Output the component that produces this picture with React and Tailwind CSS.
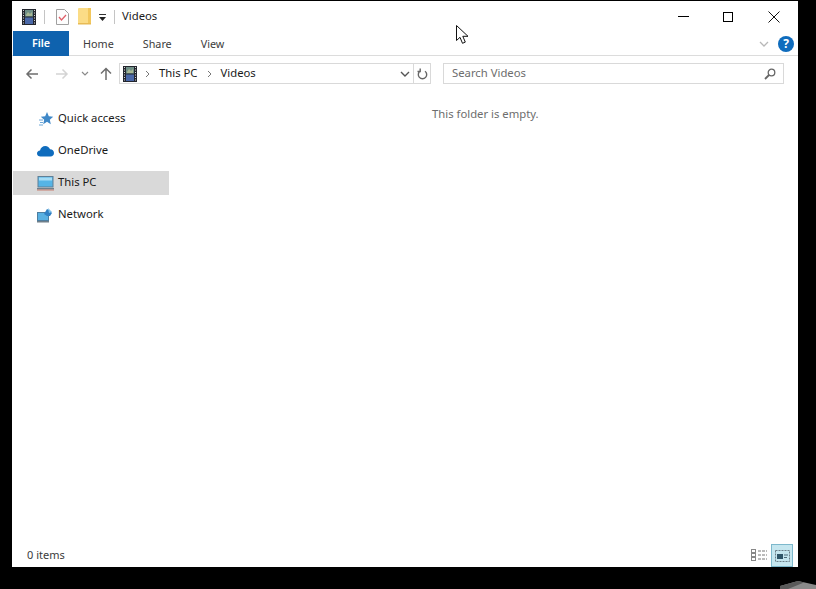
import React from "react";

const font = { fontFamily: '"Noto Sans", "Open Sans", sans-serif' };

function VideosIcon({ className = "" }) {
  return (
    <svg width="14" height="16" viewBox="0 0 14 16" className={className}>
      <rect x="0" y="0" width="14" height="16" fill="#23262e" />
      <rect x="3" y="1" width="8" height="6.500" fill="#6f8f86" />
      <rect x="3" y="8.500" width="8" height="6.500" fill="#4a68a8" />
      <path d="M4 6l2-3 2 2 2-2v4H4z" fill="#a8b894" />
      <path d="M1 1.500h1M1 4h1M1 6.500h1M1 9h1M1 11.500h1M1 14h1M12 1.500h1M12 4h1M12 6.500h1M12 9h1M12 11.500h1M12 14h1" stroke="#d8d8d8" strokeWidth="1" />
    </svg>
  );
}

function TaskIcon() {
  return (
    <svg width="13" height="16" viewBox="0 0 13 16">
      <path d="M.5.5h8l4 4v11H.5z" fill="#fdfdfd" stroke="#a0a0a0" />
      <path d="M3 8l2.500 3L10 6" fill="none" stroke="#e0606a" strokeWidth="1.300" />
    </svg>
  );
}

function FolderIcon() {
  return (
    <svg width="14" height="17" viewBox="0 0 14 17">
      <rect x="0" y="0" width="13" height="16" rx="1" fill="#fbdc86" />
      <rect x="10" y="0" width="3" height="16" fill="#f2c75c" />
      <rect x="0" y="15" width="13" height="1.500" fill="#e8bb55" />
    </svg>
  );
}

function Sep() {
  return <div className="h-[14px] w-px bg-[#c4c4c4]" />;
}

function QuickAccessIcon() {
  return (
    <svg width="16" height="16" viewBox="0 0 16 16">
      <path d="M9 1l1.800 4.300 4.400.4-3.400 3 1 4.500L9 10.800 5.200 13.200l1-4.500-3.400-3 4.400-.4z" fill="#3f88c8" />
      <path d="M1 9h4M2 11.500h3M1 14h4" stroke="#6fa8d8" strokeWidth="1" />
    </svg>
  );
}

function CloudIcon() {
  return (
    <svg width="17" height="12" viewBox="0 0 17 12">
      <path d="M3.500 11.500C1.500 11.500 0 10.200 0 8.500 0 6.800 1.300 5.700 3 5.500 3.700 2.700 5.800 1 8.300 1c2.300 0 4 1.300 4.700 3.300 2.300 0 4 1.700 4 3.700 0 2-1.500 3.500-3.500 3.500z" fill="#0f6cbd" />
    </svg>
  );
}

function PcIcon() {
  return (
    <svg width="17" height="15" viewBox="0 0 17 15">
      <rect x="1" y="0.500" width="15" height="10.500" fill="#55b4e6" stroke="#5f7f96" />
      <rect x="2" y="1.500" width="13" height="3" fill="#a5dcf5" />
      <rect x="0" y="12" width="17" height="1.500" fill="#6f7f8a" />
      <rect x="0" y="13.500" width="17" height="1" fill="#c77f70" />
    </svg>
  );
}

function NetworkIcon() {
  return (
    <svg width="17" height="16" viewBox="0 0 17 16">
      <rect x="0.500" y="5.500" width="11" height="8" fill="#58b0e2" stroke="#4d7ea0" />
      <rect x="0" y="14" width="12" height="1.500" fill="#6f7f8a" />
      <path d="M7 7l3-5 2 1 3 3-2 3-3 0z" fill="#2f80c4" />
      <path d="M11 1l4 4-3 1z" fill="#7fbfe8" />
    </svg>
  );
}

function NavItem({ icon, label, active }) {
  return (
    <div className={`ml-px flex h-6 items-center ${active ? "bg-[#d9d9d9]" : ""}`}>
      <div className="flex w-[45px] shrink-0 justify-end pr-1">{icon}</div>
      <span className="pb-0.5 text-[#1a1a1a]">{label}</span>
    </div>
  );
}

export default function App() {
  return (
    <div style={font} className="relative flex h-[589px] w-[816px] overflow-hidden bg-black">
      <div className="mt-px ml-3 flex h-[566px] w-[786px] flex-col bg-white text-[11.3px] text-[#1a1a1a]">
        {/* title bar */}
        <div className="flex h-[31px] shrink-0 items-center pl-[10px]">
          <VideosIcon />
          <div className="ml-2 mr-[11px]"><Sep /></div>
          <TaskIcon />
          <div className="ml-[9px]"><FolderIcon /></div>
          <svg width="10" height="10" viewBox="0 0 10 10" className="ml-[6px] mt-[3px]">
            <path d="M1 1.500h7" stroke="#333" />
            <path d="M1 4h7L4.500 8z" fill="#222" />
          </svg>
          <div className="ml-[6px] mr-[7px]"><Sep /></div>
          <span>Videos</span>
          <div className="ml-auto flex items-center">
            <div className="mr-[34px] h-px w-[11px] bg-black" />
            <div className="mr-[35px] h-[10px] w-[10px] border border-black" />
            <svg width="12" height="12" viewBox="0 0 12 12" className="mr-[18px]">
              <path d="M.5.5l11 11M11.500.5l-11 11" stroke="#111" strokeWidth="1" />
            </svg>
          </div>
        </div>

        {/* ribbon tabs */}
        <div className="flex h-[24px] shrink-0 items-stretch border-b border-[#dcdcdc] text-[10.8px] text-[#3c3c3c]">
          <div className="-mt-px mb-[-1px] ml-px flex w-[56px] items-center justify-center bg-[#0f62ae] font-semibold text-white">File</div>
          <span className="ml-[14px] flex items-center pt-0.5">Home</span>
          <span className="ml-[29px] flex items-center pt-0.5">Share</span>
          <span className="ml-[29px] flex items-center pt-0.5">View</span>
          <div className="ml-auto flex items-center pr-[4px]">
            <svg width="10" height="6" viewBox="0 0 10 6" className="mr-[9px]">
              <path d="M1 1l4 4 4-4" fill="none" stroke="#b8b8b8" strokeWidth="1.300" />
            </svg>
            <div className="flex h-4 w-4 items-center justify-center rounded-full bg-[#0f6cbd] text-[12px] leading-none font-bold text-white">?</div>
          </div>
        </div>

        {/* address row */}
        <div className="flex h-[35px] shrink-0 items-center">
          <svg width="14" height="12" viewBox="0 0 14 12" className="ml-[13px]">
            <path d="M13 6H2M6.500 1.500L2 6l4.500 4.500" fill="none" stroke="#6e6e6e" strokeWidth="1.500" />
          </svg>
          <svg width="14" height="12" viewBox="0 0 14 12" className="ml-[16px]">
            <path d="M1 6h11M7.500 1.500L12 6l-4.500 4.500" fill="none" stroke="#d4d4d4" strokeWidth="1.500" />
          </svg>
          <svg width="8" height="5" viewBox="0 0 8 5" className="ml-3">
            <path d="M1 1l3 3 3-3" fill="none" stroke="#8a8a8a" strokeWidth="1.200" />
          </svg>
          <svg width="12" height="13" viewBox="0 0 12 13" className="ml-[11px]">
            <path d="M6 13V2M1 6.500L6 1.500l5 5" fill="none" stroke="#6e6e6e" strokeWidth="1.500" />
          </svg>
          <div className="ml-[7px] flex h-[21px] w-[312px] items-center border border-[#d9d9d9]">
            <VideosIcon className="ml-[3px]" />
            <svg width="5" height="8" viewBox="0 0 5 8" className="ml-[8px]">
              <path d="M1 1l3 3-3 3" fill="none" stroke="#777" />
            </svg>
            <span className="ml-[9px]">This PC</span>
            <svg width="5" height="8" viewBox="0 0 5 8" className="ml-[9px]">
              <path d="M1 1l3 3-3 3" fill="none" stroke="#777" />
            </svg>
            <span className="ml-[9px]">Videos</span>
            <svg width="10" height="6" viewBox="0 0 10 6" className="ml-auto mr-[3px]">
              <path d="M1 1l4 4 4-4" fill="none" stroke="#555" strokeWidth="1.400" />
            </svg>
            <div className="flex h-full w-[17px] items-center justify-center border-l border-[#d9d9d9]">
              <svg width="11" height="12" viewBox="0 0 11 12">
                <path d="M3 3.200A4.200 4.200 0 1 0 8 3.200M3.200 0.500v3H.500" fill="none" stroke="#666" strokeWidth="1.400" />
              </svg>
            </div>
          </div>
          <div className="ml-3 flex h-[21px] w-[341px] items-center justify-between border border-[#d9d9d9] pr-[7px] pl-2 text-[#6d6d6d]">
            <span>Search Videos</span>
            <svg width="12" height="12" viewBox="0 0 12 12">
              <circle cx="7.500" cy="4.500" r="3.300" fill="none" stroke="#666" strokeWidth="1.300" />
              <path d="M5 7l-4 4" stroke="#666" strokeWidth="1.800" />
            </svg>
          </div>
        </div>

        {/* body */}
        <div className="flex min-h-0 flex-1">
          <div className="flex w-[157px] shrink-0 flex-col gap-2 pt-4">
            <NavItem icon={<QuickAccessIcon />} label="Quick access" />
            <NavItem icon={<CloudIcon />} label="OneDrive" />
            <NavItem icon={<PcIcon />} label="This PC" active />
            <NavItem icon={<NetworkIcon />} label="Network" />
          </div>
          <div className="flex-1 pt-[15px] pl-[263px] text-[#6d6d6d]">This folder is empty.</div>
        </div>

        {/* status bar */}
        <div className="flex h-[25px] shrink-0 items-center justify-between pl-[15px] text-[11px] text-[#3c3c3c]">
          <span className="pt-0.5">0 items</span>
          <div className="flex items-center self-end pr-[5px]">
            <svg width="17" height="13" viewBox="0 0 17 13" className="mr-[3px]">
              <rect x="0.500" y="0.500" width="4" height="3" fill="none" stroke="#888" />
              <rect x="0.500" y="4.500" width="4" height="3" fill="none" stroke="#888" />
              <rect x="0.500" y="8.500" width="4" height="3" fill="none" stroke="#888" />
              <path d="M7 2h9M7 6h9M7 10h9" stroke="#777" strokeDasharray="3 1" />
            </svg>
            <div className="flex h-[23px] w-[22px] items-center justify-center border border-[#7db8cc] bg-[#c5e6ef]">
              <svg width="15" height="12" viewBox="0 0 15 12">
                <rect x="0.500" y="0.500" width="14" height="11" fill="none" stroke="#6b7f88" strokeDasharray="2 1" />
                <rect x="2" y="4" width="6" height="5" fill="#2f5568" />
                <path d="M9 5h4M9 7.500h3" stroke="#4d6a78" />
              </svg>
            </div>
          </div>
        </div>
      </div>

      {/* mouse pointer */}
      <svg width="13" height="20" viewBox="0 0 13 20" className="absolute top-[25px] left-[456px]">
        <path d="M.5.5v15l3.500-3.200 2.500 6 2.800-1.200-2.500-5.800H12z" fill="#fff" stroke="#111" strokeWidth="1" />
      </svg>

      {/* desktop item peeking in below the window */}
      <svg width="36" height="9" viewBox="0 0 36 9" className="absolute top-[580px] left-[780px]">
        <path d="M0 6L18 1l18 4v4H0z" fill="#8a8a8a" />
        <path d="M0 6l18-5 6 1.500L8 9H0z" fill="#5a5a5a" />
      </svg>
    </div>
  );
}
